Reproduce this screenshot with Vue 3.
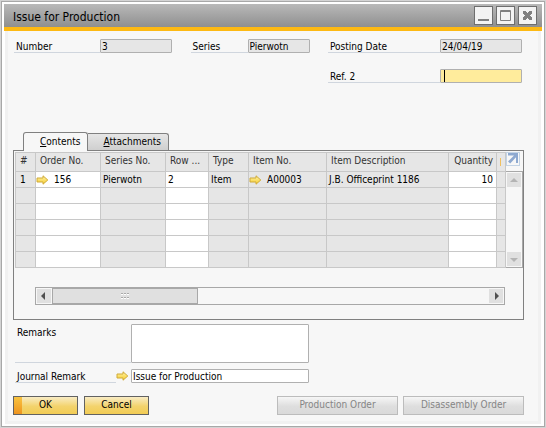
<script setup>
import { ref } from 'vue'

const form = ref({
  number: '3',
  series: 'Pierwotn',
  postingDate: '24/04/19',
  ref2: '',
  remarks: '',
  journalRemark: 'Issue for Production'
})

const columns = [
  { key: 'idx', title: '#', cls: 'c-idx' },
  { key: 'order', title: 'Order No.', cls: 'c-order', editable: true, link: true },
  { key: 'series', title: 'Series No.', cls: 'c-series' },
  { key: 'row', title: 'Row ...', cls: 'c-row', editable: true },
  { key: 'type', title: 'Type', cls: 'c-type' },
  { key: 'item', title: 'Item No.', cls: 'c-item', link: true },
  { key: 'desc', title: 'Item Description', cls: 'c-desc' },
  { key: 'qty', title: 'Quantity', cls: 'c-qty', editable: true },
  { key: 'more', title: '', cls: 'c-more' }
]

const rows = [
  { idx: '1', order: '156', series: 'Pierwotn', row: '2', type: 'Item', item: 'A00003', desc: 'J.B. Officeprint 1186', qty: '10' },
  {}, {}, {}, {}, {}
]
</script>

<template>
  <svg class="defs" aria-hidden="true">
    <defs>
      <linearGradient id="arrow-fill" x1="0" y1="0" x2="0" y2="1">
        <stop offset="0" stop-color="#fff3a8" />
        <stop offset="1" stop-color="#f6cc2c" />
      </linearGradient>
      <symbol id="link-arrow" viewBox="0 0 12 10">
        <path d="M.5 3H6.500V.8L11.300 5 6.500 9.200V7H.5Z" fill="url(#arrow-fill)" stroke="#cfaa38" stroke-width="1" />
      </symbol>
    </defs>
  </svg>

  <main class="window">
    <header class="titlebar">
      <h1>Issue for Production</h1>
      <div class="controls">
        <button type="button" aria-label="Minimize">
          <svg viewBox="0 0 17 17"><path d="M3 13h11" stroke="#808080" stroke-width="2" /></svg>
        </button>
        <button type="button" aria-label="Maximize">
          <svg viewBox="0 0 17 17"><path d="M3.500 3.500h10v10h-10z M3 4.500h11" fill="none" stroke="#808080" /></svg>
        </button>
        <button type="button" aria-label="Close">
          <svg viewBox="0 0 17 17"><path d="M4 4h3v1h1v1h1V5h1V4h3v3h-1v1h-1v1h1v1h1v3h-3v-1H9v-1H8v1H7v1H4v-3h1V9h1V8H5V7H4z" fill="#808080" /></svg>
        </button>
      </div>
    </header>

    <form class="body" @submit.prevent>
      <div class="head">
        <div class="field f-number">
          <label for="number">Number</label>
          <input id="number" v-model="form.number" readonly />
        </div>
        <div class="field f-series">
          <label for="series">Series</label>
          <input id="series" v-model="form.series" readonly />
        </div>
        <div class="field f-date">
          <label for="date">Posting Date</label>
          <input id="date" v-model="form.postingDate" readonly />
        </div>
        <div class="field f-date f-ref">
          <label for="ref2">Ref. 2</label>
          <div class="active-box">
            <input id="ref2" v-model="form.ref2" class="active" />
            <span class="caret"></span>
          </div>
        </div>
      </div>

      <div class="tabs" role="tablist">
        <button type="button" class="tab selected" role="tab" aria-selected="true"><u>C</u>ontents</button>
        <button type="button" class="tab" role="tab" aria-selected="false"><u>A</u>ttachments</button>
      </div>

      <section class="panel">
        <div class="grid">
          <table>
            <thead>
              <tr>
                <th v-for="c in columns" :key="c.key" :class="c.cls">
                  {{ c.title }}<span v-if="c.key === 'more'" class="cut"></span>
                </th>
              </tr>
            </thead>
            <tbody>
              <tr v-for="(r, i) in rows" :key="i">
                <td v-for="c in columns" :key="c.key" :class="[c.cls, { editable: c.editable }]">
                  <span v-if="c.link && r[c.key]" class="linked">
                    <svg class="arrow"><use href="#link-arrow" /></svg>{{ r[c.key] }}
                  </span>
                  <template v-else>{{ r[c.key] }}</template>
                </td>
              </tr>
            </tbody>
          </table>
          <div class="side">
            <button type="button" class="expand" aria-label="Expand table">
              <svg viewBox="0 0 12 12"><path d="M1 0h10v10H9V4.200L3.200 10.500 1 8.500 7 2.500H1z" fill="#8ea9d0" /></svg>
            </button>
            <div class="vscroll">
              <button type="button" aria-label="Scroll up"><svg viewBox="0 0 14 14"><path d="M3 9l4-4 4 4z" fill="#b4b4b4" /></svg></button>
              <button type="button" aria-label="Scroll down"><svg viewBox="0 0 14 14"><path d="M3 6l4 4 4-4z" fill="#b4b4b4" /></svg></button>
            </div>
          </div>
        </div>
        <div class="hscroll">
          <button type="button" aria-label="Scroll left"><svg viewBox="0 0 14 14"><path d="M8 3v8L4 7z" fill="#505050" /></svg></button>
          <div class="thumb">
            <svg viewBox="0 0 9 6"><path d="M0 1h2M3 1h2M6 1h2M0 5h2M3 5h2M6 5h2" stroke="#fff" stroke-width="2" /><path d="M0 .5h2M3 .5h2M6 .5h2M0 4.500h2M3 4.500h2M6 4.500h2" stroke="#aaa" /></svg>
          </div>
          <button type="button" class="right" aria-label="Scroll right"><svg viewBox="0 0 14 14"><path d="M6 3v8l4-4z" fill="#505050" /></svg></button>
        </div>
      </section>

      <div class="remarks">
        <label for="remarks" class="tall">Remarks</label>
        <textarea id="remarks" v-model="form.remarks"></textarea>
        <div class="journal">
          <label for="journal">Journal Remark</label>
          <svg class="arrow"><use href="#link-arrow" /></svg>
        </div>
        <input id="journal" v-model="form.journalRemark" />
      </div>

      <footer class="actions">
        <div class="group">
          <button type="submit" class="btn primary">OK</button>
          <button type="button" class="btn">Cancel</button>
        </div>
        <div class="group tight">
          <button type="button" class="btn wide" disabled>Production Order</button>
          <button type="button" class="btn wide" disabled>Disassembly Order</button>
        </div>
      </footer>
    </form>
  </main>
</template>

<style>
body {
  background: #d4d4d4;
}
</style>

<style scoped>
* {
  box-sizing: border-box;
}

.defs {
  position: absolute;
  width: 0;
  height: 0;
}

.window {
  margin: 1px;
  border: 1px solid #a8a8a8;
  padding: 2px;
  background: #fff;
  font-family: "DejaVu Sans Condensed", "Noto Sans", sans-serif;
  font-size: 10px;
  line-height: 12px;
  color: #000;
}

button,
input,
textarea {
  font: inherit;
  color: inherit;
  margin: 0;
  border-radius: 0;
}

svg {
  display: block;
}

.titlebar {
  display: flex;
  align-items: center;
  justify-content: space-between;
  height: 27px;
  padding: 0 5px 0 9px;
  border-bottom: 4px solid #fdb913;
  background: linear-gradient(#b9b9b9, #8f8f8f);
}

h1 {
  margin: 0;
  padding-top: 2px;
  font-size: 12px;
  line-height: 14px;
  font-weight: 400;
}

.controls {
  display: flex;
  gap: 3px;
}

.controls button {
  width: 19px;
  height: 19px;
  padding: 0;
  border: 1px solid #6e6e6e;
  background: #f3f3f3;
}

.controls svg {
  width: 17px;
  height: 17px;
}

.body {
  margin: 0 1px;
  padding: 8px 14px 6px 5px;
  border: 3px solid #f1f1f1;
  border-top: 0;
  background: #f7f7f7;
}

.head {
  display: grid;
  grid-template-columns: 158px 119px 194px;
  justify-content: space-between;
  row-gap: 16px;
  padding: 0 2px 0 1px;
}

.field {
  display: flex;
}

.f-ref {
  grid-column: 3;
}

.field label {
  flex: 1;
  padding: 2px 0 0 2px;
  border-bottom: 1px solid #d0d6de;
  line-height: 11px;
}

input {
  height: 14px;
  padding: 0 1px;
  border: 1px solid #b0b0b0;
  border-radius: 1px;
  background: #fff;
  outline: none;
}

input[readonly] {
  background: #e6e6e6;
}

.f-number input {
  width: 72px;
}

.f-series input {
  width: 62px;
}

.f-date input {
  width: 82px;
}

.active-box {
  position: relative;
  display: flex;
}

.active-box .active {
  background: #ffec9c;
}

.caret {
  position: absolute;
  left: 4px;
  top: 1px;
  width: 1px;
  height: 12px;
  background: #000;
}

.tabs {
  display: flex;
  align-items: flex-end;
  margin-top: 49px;
  padding-left: 10px;
}

.tab {
  height: 17px;
  padding: 0 7px 0 15px;
  border: 1px solid #808080;
  border-left: 0;
  border-bottom: 0;
  border-radius: 0 3px 0 0;
  background: linear-gradient(#e6e6e6, #cfcfcf);
}

.tab.selected {
  position: relative;
  height: 19px;
  margin-bottom: -1px;
  padding: 0 7px 1px 16px;
  border-left: 1px solid #808080;
  border-radius: 3px 3px 0 0;
  background: #f7f7f7;
}

.panel {
  border: 1px solid #808080;
  padding: 1px 0 14px 1px;
}

.grid {
  display: flex;
}

table {
  flex: 1;
  width: 0;
  table-layout: fixed;
  border-collapse: collapse;
  background: #e6e6e6;
}

th,
td {
  height: 16px;
  padding: 0 3px 0 2px;
  border: 1px solid #c8c8c8;
  line-height: 12px;
  text-align: left;
  font-weight: 400;
  white-space: nowrap;
  overflow: hidden;
}

th {
  height: 19px;
  padding: 0 3px 2px 4px;
  color: #333;
}

.editable {
  background: #fff;
}

.c-idx {
  width: 20px;
  padding-left: 4px;
}

.c-order,
.c-series {
  width: 65px;
}

.c-row {
  width: 43px;
}

.c-type {
  width: 40px;
}

.c-item {
  width: 78px;
}

.c-qty {
  width: 48px;
  text-align: right;
}

.c-more {
  width: 9px;
  padding: 0 0 0 3px;
}

.cut {
  display: block;
  width: 1px;
  height: 8px;
  background: #f0c060;
}

.linked {
  display: flex;
  align-items: center;
  gap: 5px;
  margin-left: -2px;
}

.arrow {
  width: 13px;
  height: 10px;
}

.side {
  display: flex;
  flex-direction: column;
  width: 17px;
}

.expand {
  width: 14px;
  height: 14px;
  margin-bottom: 5px;
  padding: 0;
  border: 1px solid #c3d3e4;
  background: #f7f7f7;
}

.expand svg {
  width: 12px;
  height: 12px;
}

.vscroll {
  flex: 1;
  display: flex;
  flex-direction: column;
  justify-content: space-between;
  padding: 1px;
  border: 1px solid #a8a8a8;
  border-left: 0;
}

.vscroll button,
.hscroll button {
  width: 14px;
  height: 14px;
  padding: 0;
  border: 0;
  background: #e0e0e0;
}

.vscroll svg,
.hscroll button svg {
  width: 14px;
  height: 14px;
}

.hscroll {
  display: flex;
  align-items: center;
  height: 18px;
  margin: 19px 18px 0 20px;
  padding: 0 1px;
  border: 1px solid #a8a8a8;
}

.thumb {
  display: flex;
  align-items: center;
  justify-content: center;
  flex: 0 0 146px;
  height: 16px;
  margin-left: 1px;
  border: 1px solid #a8a8a8;
  background: #e0e0e0;
}

.thumb svg {
  width: 9px;
  height: 6px;
}

.hscroll .right {
  margin-left: auto;
}

.remarks {
  display: grid;
  grid-template-columns: 116px 178px;
  row-gap: 6px;
  margin-top: 4px;
  padding-left: 2px;
}

.remarks label {
  padding: 2px 0 0 2px;
  border-bottom: 1px solid #d0d6de;
  line-height: 11px;
}

.remarks .tall {
  padding-top: 3px;
}

.remarks textarea {
  height: 39px;
  border: 1px solid #b0b0b0;
  border-radius: 1px;
  background: #fff;
  resize: none;
  outline: none;
}

.journal {
  display: flex;
  align-items: center;
}

.journal label {
  width: 101px;
}

.actions {
  display: flex;
  justify-content: space-between;
  margin-top: 13px;
}

.group {
  display: flex;
  gap: 6px;
}

.group.tight {
  gap: 5px;
}

.btn {
  width: 65px;
  height: 19px;
  padding: 0 0 2px;
  border: 1px solid #626262;
  background: linear-gradient(#f9ecc4, #f3d36c 55%, #f2cc55);
}

.btn.primary {
  background:
    linear-gradient(#f9c440, #ee9420) left / 8px 100% no-repeat,
    linear-gradient(#f9ecc4, #f3d36c 55%, #f2cc55);
}

.btn.wide {
  width: 121px;
}

.btn.wide:disabled {
  border-color: #bcbcbc;
  background: linear-gradient(#f6f6f6, #dedede 55%, #dadada);
  color: #858585;
}
</style>
